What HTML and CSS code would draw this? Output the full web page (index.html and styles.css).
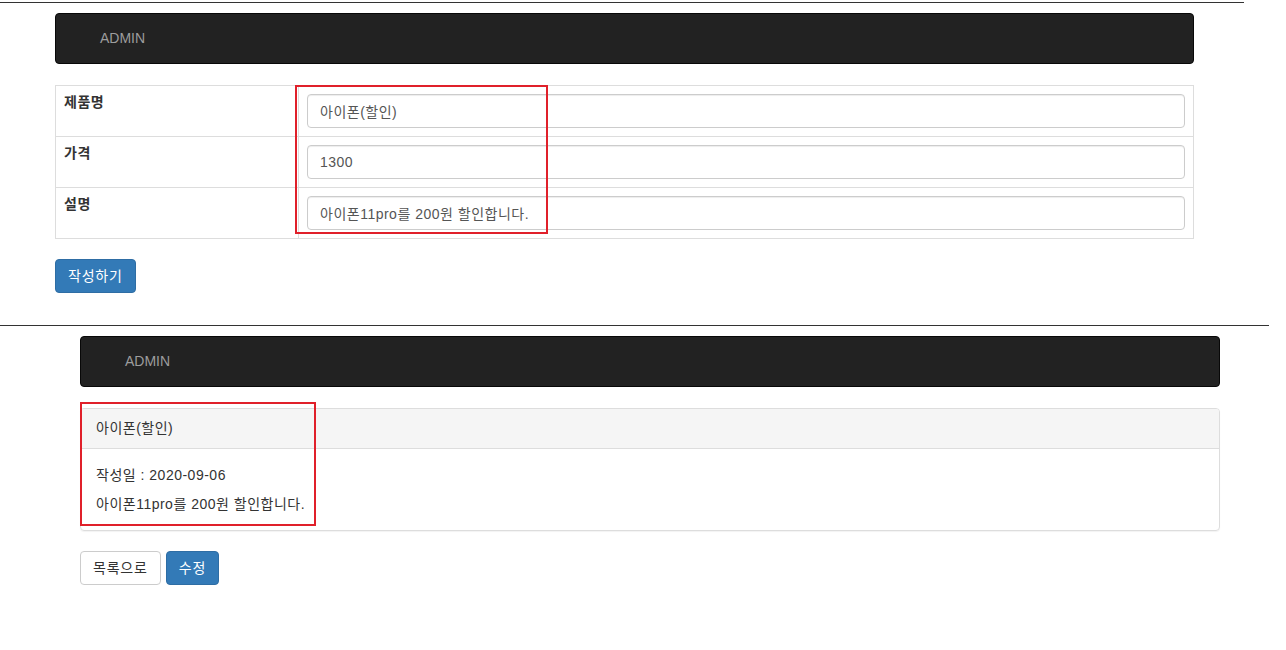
FILE: index.html
```html
<!DOCTYPE html>
<html lang="ko">
<head>
<meta charset="utf-8">
<title>ADMIN</title>
<link rel="stylesheet" href="styles.css">
</head>
<body>
<section class="shot shot-1">
  <div class="rule rule-1"></div>
  <div class="page page-1">
    <nav class="navbar"><span class="brand">ADMIN</span></nav>
    <div class="form-wrap">
      <table class="form-table">
        <tr>
          <th>제품명</th>
          <td><input class="form-control" type="text" value="아이폰(할인)"></td>
        </tr>
        <tr>
          <th>가격</th>
          <td><input class="form-control" type="text" value="1300"></td>
        </tr>
        <tr>
          <th>설명</th>
          <td><input class="form-control" type="text" value="아이폰11pro를 200원 할인합니다."></td>
        </tr>
      </table>
      <div class="highlight highlight-form"></div>
    </div>
    <div class="actions">
      <button class="btn btn-primary">작성하기</button>
    </div>
  </div>
</section>
<section class="shot shot-2">
  <div class="rule rule-2"></div>
  <div class="page page-2">
    <nav class="navbar"><span class="brand">ADMIN</span></nav>
    <div class="panel">
      <div class="panel-heading">아이폰(할인)</div>
      <div class="panel-body">
        <p>작성일 : 2020-09-06</p>
        <p>아이폰11pro를 200원 할인합니다.</p>
      </div>
      <div class="highlight highlight-panel"></div>
    </div>
    <div class="actions">
      <button class="btn btn-default">목록으로</button>
      <button class="btn btn-primary">수정</button>
    </div>
  </div>
</section>
</body>
</html>
```
FILE: styles.css
```css
* { box-sizing: border-box; }
html, body {
  margin: 0;
  padding: 0;
  background: #fff;
}
body {
  font-family: "Liberation Sans", "Noto Sans CJK KR", sans-serif;
  font-size: 14px;
  line-height: 20px;
  color: #333;
  width: 1286px;
  height: 650px;
  overflow: hidden;
}
.shot-1 {
  height: 325px;
  padding-top: 2px;
}
.rule {
  height: 1px;
  background: #333;
}
.rule-1 { width: 1244px; }
.rule-2 { width: 1269px; }
.page-1 { padding-left: 55px; width: 1194px; }
.page-2 { padding-left: 80px; width: 1220px; }

.navbar {
  margin-top: 10px;
  height: 51px;
  background: #222;
  border: 1px solid #080808;
  border-radius: 4px;
  display: flex;
  align-items: center;
  padding-left: 44px;
}
.brand {
  color: #9d9d9d;
  font-size: 14px;
  margin-top: -1px;
}

.form-wrap {
  position: relative;
  margin-top: 21px;
}
.form-table {
  width: 100%;
  border-collapse: collapse;
  border: 1px solid #ddd;
}
.form-table th,
.form-table td {
  border-top: 1px solid #ddd;
  padding: 8px;
  vertical-align: top;
  text-align: left;
}
.form-table th {
  width: 243px;
  font-weight: bold;
  border-right: 1px solid #ddd;
  padding-top: 6px;
  letter-spacing: 0.5px;
}
.form-control {
  display: block;
  width: 100%;
  height: 34px;
  padding: 6px 12px;
  font-family: inherit;
  font-size: 14px;
  line-height: 20px;
  letter-spacing: 0.5px;
  color: #555;
  background: #fff;
  border: 1px solid #ccc;
  border-radius: 4px;
  box-shadow: inset 0 1px 1px rgba(0,0,0,.075);
}

.highlight {
  position: absolute;
  border: 2px solid #e0202a;
  pointer-events: none;
}
.highlight-form {
  left: 240px;
  top: 0;
  width: 253px;
  height: 149px;
}

.actions {
  margin-top: 20px;
  display: flex;
  gap: 5px;
}
.btn {
  height: 34px;
  padding: 6px 12px;
  font-family: inherit;
  font-size: 14px;
  line-height: 20px;
  letter-spacing: 0.8px;
  border: 1px solid transparent;
  border-radius: 4px;
  cursor: pointer;
}
.btn-primary {
  color: #fff;
  background: #337ab7;
  border-color: #2e6da4;
}
.btn-default {
  color: #333;
  background: #fff;
  border-color: #ccc;
}

.panel {
  position: relative;
  margin-top: 21px;
  border: 1px solid #ddd;
  border-radius: 4px;
  box-shadow: 0 1px 1px rgba(0,0,0,.05);
  letter-spacing: 0.5px;
}
.panel-heading {
  padding: 9px 15px 10px;
  background: #f5f5f5;
  border-bottom: 1px solid #ddd;
  border-radius: 3px 3px 0 0;
}
.panel-body {
  padding: 16px 15px 16px;
}
.panel-body p {
  margin: 0 0 9px;
}
.panel-body p:last-child { margin-bottom: 0; }
.highlight-panel {
  left: -1px;
  top: -7px;
  width: 236px;
  height: 124px;
}
```
